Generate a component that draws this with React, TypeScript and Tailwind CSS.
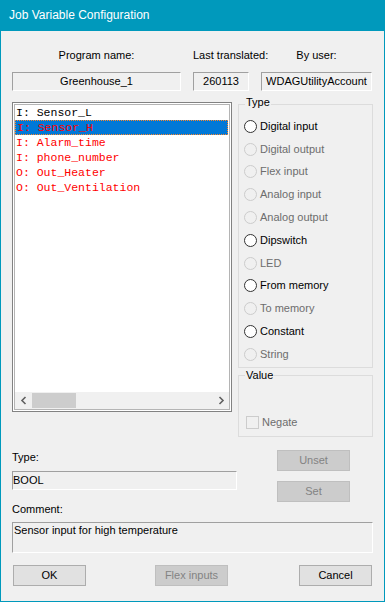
import React from "react";

const items = [
  { text: "I: Sensor_L", color: "text-black", selected: false },
  { text: "I: Sensor_H", color: "text-[#ff0000]", selected: true },
  { text: "I: Alarm_time", color: "text-[#ff0000]", selected: false },
  { text: "I: phone_number", color: "text-[#ff0000]", selected: false },
  { text: "O: Out_Heater", color: "text-[#ff0000]", selected: false },
  { text: "O: Out_Ventilation", color: "text-[#ff0000]", selected: false },
];

const types = [
  { label: "Digital input", enabled: true },
  { label: "Digital output", enabled: false },
  { label: "Flex input", enabled: false },
  { label: "Analog input", enabled: false },
  { label: "Analog output", enabled: false },
  { label: "Dipswitch", enabled: true },
  { label: "LED", enabled: false },
  { label: "From memory", enabled: true },
  { label: "To memory", enabled: false },
  { label: "Constant", enabled: true },
  { label: "String", enabled: false },
];

function Radio({ label, enabled }: { label: string; enabled: boolean }) {
  return (
    <div className="h-[22.8px] flex items-center pl-[5px] gap-[3px]">
      <span
        className={
          enabled
            ? "w-[13px] h-[13px] rounded-full border border-[#333333] bg-white"
            : "w-[13px] h-[13px] rounded-full border border-[#cccccc] bg-[#f0f0f0]"
        }
      />
      <span className={enabled ? "text-black" : "text-[#6d6d6d]"}>{label}</span>
    </div>
  );
}

function Field({ children, className }: { children: React.ReactNode; className: string }) {
  return (
    <div
      className={
        "h-[19px] flex items-center border-t border-l border-[#a0a0a0] border-r-white border-b-white border-r border-b bg-[#f0f0f0] " +
        className
      }
    >
      {children}
    </div>
  );
}

function Button({ label, disabled, className }: { label: string; disabled?: boolean; className?: string }) {
  return (
    <button
      disabled={disabled}
      className={
        (disabled
          ? "bg-[#cccccc] border-[#bfbfbf] text-[#838383] "
          : "bg-[#e1e1e1] border-[#adadad] text-black ") +
        "w-[73px] h-[21px] border flex items-center justify-center " +
        (className ?? "")
      }
    >
      {label}
    </button>
  );
}

export default function App() {
  return (
    <div className="w-[385px] h-[602px] bg-[#f0f0f0] border-x border-b border-[#0099bc] flex flex-col font-['Liberation_Sans',Arial,sans-serif] text-[11px] leading-[15px] text-black overflow-hidden">
      <div className="h-[31px] shrink-0 bg-[#0099bc] text-white text-[12px] pl-[8px] flex items-center">
        Job Variable Configuration
      </div>

      <div className="px-[11px] flex flex-col">
        {/* header labels */}
        <div className="flex mt-[17px] h-[15px]">
          <div className="w-[169px] text-center">Program name:</div>
          <div className="w-[56px] ml-[12px] text-center whitespace-nowrap">Last translated:</div>
          <div className="w-[111px] ml-[12px] text-center">By user:</div>
        </div>
        <div className="flex mt-[9px]">
          <Field className="w-[169px] justify-center">Greenhouse_1</Field>
          <Field className="w-[56px] ml-[12px] justify-center">260113</Field>
          <Field className="w-[111px] ml-[12px] justify-center">WDAGUtilityAccount</Field>
        </div>

        {/* main area */}
        <div className="flex mt-[11px]">
          <div className="w-[220px] h-[310px] border border-[#828282] bg-white p-px">
            <div className="h-full border border-[#b4b4b4] flex flex-col">
              <div className="flex-1 flex flex-col font-['Liberation_Mono','Courier_New',monospace] text-[11.5px]">
                {items.map((it) => (
                  <div
                    key={it.text}
                    className={
                      "h-[15px] pl-px flex items-center whitespace-pre " +
                      it.color +
                      (it.selected ? " bg-[#0078d7] border border-dotted border-[#ff8728] -ml-0 mr-px pl-0" : "")
                    }
                  >
                    {it.text}
                  </div>
                ))}
              </div>
              <div className="h-[17px] bg-[#f0f0f0] flex items-center">
                <div className="w-[17px] h-full flex items-center justify-center">
                  <svg width="8" height="9" viewBox="0 0 8 9">
                    <polyline points="5.5,1 2,4.5 5.5,8" fill="none" stroke="#606060" strokeWidth="1.6" />
                  </svg>
                </div>
                <div className="w-[44px] h-[15px] bg-[#cdcdcd]" />
                <div className="flex-1" />
                <div className="w-[17px] h-full flex items-center justify-center">
                  <svg width="8" height="9" viewBox="0 0 8 9">
                    <polyline points="2.5,1 6,4.5 2.5,8" fill="none" stroke="#606060" strokeWidth="1.6" />
                  </svg>
                </div>
              </div>
            </div>
          </div>

          <div className="w-[135px] ml-[6px] flex flex-col">
            <div className="mt-[2px] h-[264px] border border-[#dcdcdc] flex flex-col">
              <span className="-mt-[10px] ml-[6px] px-[1px] w-fit h-[15px] bg-[#f0f0f0]">Type</span>
              <div className="mt-[5px] flex flex-col">
                {types.map((t) => (
                  <Radio key={t.label} label={t.label} enabled={t.enabled} />
                ))}
              </div>
            </div>
            <div className="mt-[7px] h-[62px] border border-[#dcdcdc] flex flex-col">
              <span className="-mt-[8px] ml-[6px] px-[1px] w-fit h-[15px] bg-[#f0f0f0]">Value</span>
              <div className="mt-auto mb-[7px] pl-[7px] flex items-center gap-[3px] h-[13px]">
                <span className="w-[13px] h-[13px] border border-[#cccccc] bg-[#f0f0f0]" />
                <span className="text-[#6d6d6d]">Negate</span>
              </div>
            </div>
          </div>
        </div>

        {/* lower section */}
        <div className="flex mt-[13px]">
          <div className="w-[225px] flex flex-col">
            <div className="h-[15px]">Type:</div>
            <Field className="mt-[6px] w-[225px]">BOOL</Field>
          </div>
          <div className="ml-[40px] flex flex-col">
            <Button label="Unset" disabled />
            <Button label="Set" disabled className="mt-[10px]" />
          </div>
        </div>

        <div className="h-[15px]">Comment:</div>
        <div className="mt-[5px] h-[31px] w-[361px] border-t border-l border-[#a0a0a0] border-r border-b border-r-white border-b-white pl-px">
          Sensor input for high temperature
        </div>

        <div className="flex mt-[12px]">
          <Button label="OK" className="ml-px" />
          <Button label="Flex inputs" disabled className="ml-[69px]" />
          <Button label="Cancel" className="ml-[71px]" />
        </div>
      </div>
    </div>
  );
}
